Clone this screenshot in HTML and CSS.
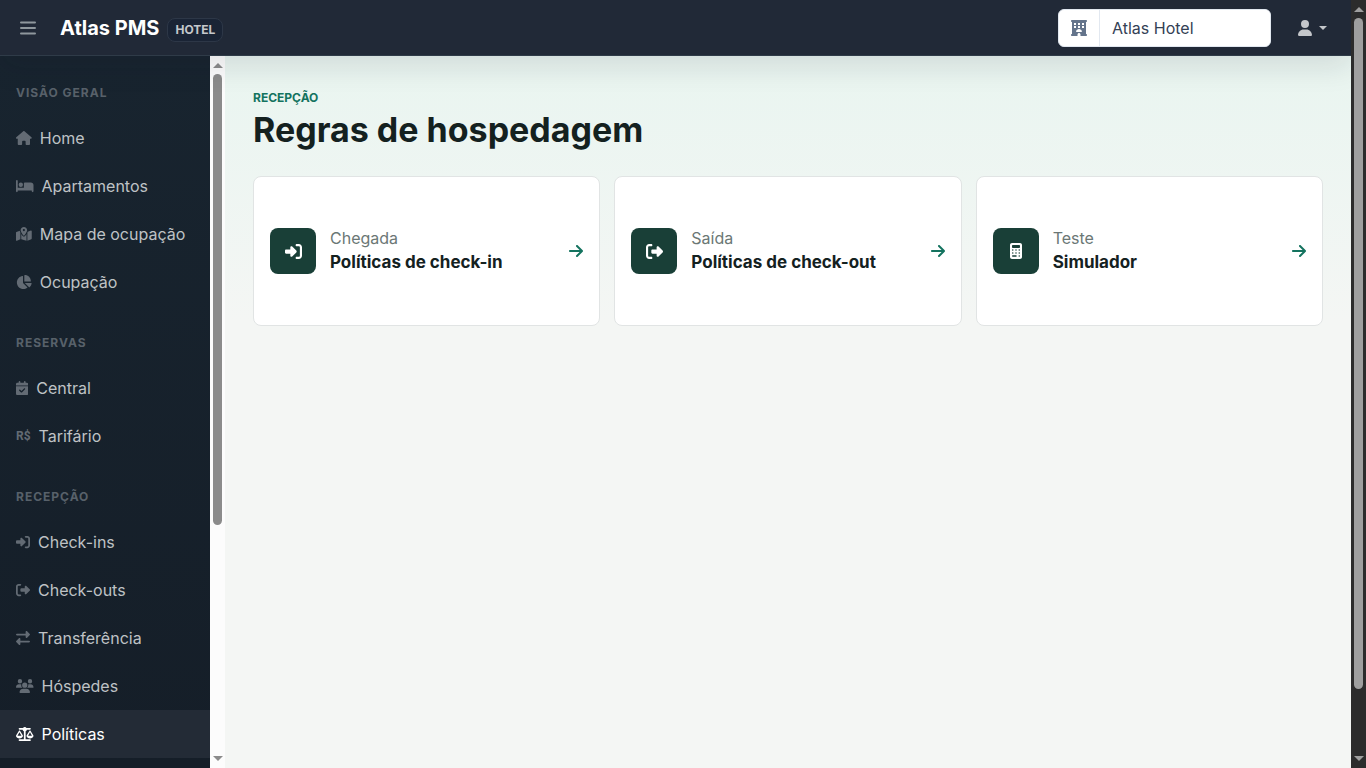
FILE: index.html
```html
<!DOCTYPE html>
<html lang="pt-BR">
<head>
  <meta charset="UTF-8" />
  <meta name="viewport" content="width=device-width, initial-scale=1" />
  <title>Atlas PMS - Regras de hospedagem</title>
  <link rel="stylesheet" href="styles.css">
</head>
<body>
  <!-- Shared icons -->
  <svg class="icon-defs" aria-hidden="true">
    <symbol id="i-in" viewBox="0 0 512 512"><path d="M217.9 105.9L340.7 228.7c7.2 7.2 11.3 17.1 11.3 27.3s-4.1 20.1-11.3 27.3L217.9 406.1c-6.4 6.4-15 9.9-24 9.9c-18.7 0-33.9-15.2-33.9-33.9l0-62.1L32 320c-17.7 0-32-14.3-32-32l0-64c0-17.7 14.3-32 32-32l128 0 0-62.1c0-18.7 15.2-33.9 33.9-33.9c9 0 17.6 3.6 24 9.9zM352 416l64 0c17.7 0 32-14.3 32-32l0-256c0-17.7-14.3-32-32-32l-64 0c-17.7 0-32-14.3-32-32s14.3-32 32-32l64 0c53 0 96 43 96 96l0 256c0 53-43 96-96 96l-64 0c-17.7 0-32-14.3-32-32s14.3-32 32-32z"/></symbol>
    <symbol id="i-out" viewBox="0 0 512 512"><path d="M377.9 105.9L500.7 228.7c7.2 7.2 11.3 17.1 11.3 27.3s-4.1 20.1-11.3 27.3L377.9 406.1c-6.4 6.4-15 9.9-24 9.9c-18.7 0-33.9-15.2-33.9-33.9l0-62.1-128 0c-17.7 0-32-14.3-32-32l0-64c0-17.7 14.3-32 32-32l128 0 0-62.1c0-18.7 15.2-33.9 33.9-33.9c9 0 17.6 3.6 24 9.9zM160 96L96 96c-17.7 0-32 14.3-32 32l0 256c0 17.7 14.3 32 32 32l64 0c17.7 0 32 14.3 32 32s-14.3 32-32 32l-64 0c-53 0-96-43-96-96L0 128C0 75 43 32 96 32l64 0c17.7 0 32 14.3 32 32s-14.3 32-32 32z"/></symbol>
    <symbol id="i-arrow" viewBox="0 0 448 512"><path d="M438.6 278.6c12.5-12.5 12.5-32.8 0-45.3l-160-160c-12.5-12.5-32.8-12.5-45.3 0s-12.5 32.8 0 45.3L338.8 224 32 224c-17.7 0-32 14.3-32 32s14.3 32 32 32l306.7 0L233.4 393.4c-12.5 12.5-12.5 32.8 0 45.3s32.8 12.5 45.3 0l160-160z"/></symbol>
  </svg>

  <div class="app">
    <header class="topbar">
      <button class="menu-btn" type="button" aria-label="Menu">
        <svg viewBox="0 0 16 16" width="16" height="16"><path d="M1 2.5h14M1 8h14M1 13.5h14" fill="none" stroke="currentColor" stroke-width="2" stroke-linecap="round"/></svg>
      </button>
      <a class="brand" href="#">Atlas PMS <span class="brand-badge">HOTEL</span></a>
      <div class="hotel-picker">
        <label class="hotel-icon" for="hotel" aria-label="Hotel">
          <svg viewBox="0 0 512 512" width="16" height="16"><path fill-rule="evenodd" d="M0 32C0 14.3 14.3 0 32 0H480c17.7 0 32 14.3 32 32s-14.3 32-32 32V448c17.7 0 32 14.3 32 32s-14.3 32-32 32H304V464c0-26.5-21.5-48-48-48s-48 21.5-48 48v48H32c-17.7 0-32-14.3-32-32s14.3-32 32-32V64C14.3 64 0 49.7 0 32zM96 96v64h64V96zM224 96v64h64V96zM352 96v64h64V96zM96 192v64h64v-64zM224 192v64h64v-64zM352 192v64h64v-64zM328 384c13.3 0 24.3-10.9 21-23.8c-10.6-41.5-48.2-72.2-93-72.2s-82.5 30.7-93 72.2c-3.3 12.8 7.8 23.8 21 23.8H328z"/></svg>
        </label>
        <select class="hotel-select" id="hotel">
          <option>Atlas Hotel</option>
        </select>
      </div>
      <button class="user-btn" type="button" aria-label="Conta">
        <svg viewBox="0 0 448 512" width="16" height="16"><path d="M224 256A128 128 0 1 0 224 0a128 128 0 1 0 0 256zm-45.7 48C79.8 304 0 383.8 0 482.3C0 498.7 13.3 512 29.7 512H418.3c16.4 0 29.7-13.3 29.7-29.7C448 383.8 368.2 304 269.7 304H178.3z"/></svg>
        <span class="caret"></span>
      </button>
    </header>

    <div class="layout">
      <nav class="sidebar">
        <h2 class="nav-heading">Visão geral</h2>
        <a class="nav-item" href="#">
          <svg class="nav-icon" viewBox="0 0 576 512"><path d="M575.8 255.5c0 18-15 32.1-32 32.1h-32l.7 160.2c0 2.7-.2 5.4-.5 8.1V472c0 22.1-17.9 40-40 40H456c-1.1 0-2.2 0-3.3-.1c-1.4 .1-2.8 .1-4.2 .1H416 392c-22.1 0-40-17.9-40-40V448 384c0-17.7-14.3-32-32-32H256c-17.7 0-32 14.3-32 32v64 24c0 22.1-17.9 40-40 40H160 128.1c-1.5 0-3-.1-4.5-.2c-1.2 .1-2.4 .2-3.6 .2H104c-22.1 0-40-17.9-40-40V360c0-.9 0-1.9 .1-2.8V287.6H32c-18 0-32-14-32-32.1c0-9 3-17 10-24L266.4 8c7-7 15-8 22-8s15 2 21 7L564.8 231.5c8 7 12 15 11 24z"/></svg>
          Home
        </a>
        <a class="nav-item" href="#">
          <svg class="nav-icon" viewBox="0 0 640 512"><path d="M32 32c17.7 0 32 14.3 32 32V320H288V160c0-17.7 14.3-32 32-32H544c53 0 96 43 96 96V448c0 17.7-14.3 32-32 32s-32-14.3-32-32V416H352 320 64v32c0 17.7-14.3 32-32 32s-32-14.3-32-32V64C0 46.3 14.3 32 32 32zm144 96a80 80 0 1 1 0 160 80 80 0 1 1 0-160z"/></svg>
          Apartamentos
        </a>
        <a class="nav-item" href="#">
          <svg class="nav-icon" viewBox="0 0 576 512"><path fill-rule="evenodd" d="M408 120c0 54.6-73.1 151.9-105.2 192c-7.7 9.6-22 9.6-29.6 0C241.1 271.9 168 174.6 168 120C168 53.7 221.7 0 288 0s120 53.7 120 120zm8 80.4c3.5-6.9 6.7-13.8 9.6-20.6c.5-1.2 1-2.5 1.5-3.7l116-46.4C558.9 123.4 576 135 576 152V422.8c0 9.8-6 18.6-15.1 22.3L416 503V200.4zM137.6 138.3c2.4 14.1 7.2 28.3 12.8 41.5c2.9 6.8 6.1 13.7 9.6 20.6V451.8L32.9 502.7C17.1 509 0 497.4 0 480.4V209.6c0-9.8 6-18.6 15.1-22.3l122.6-49zM327.8 332c13.9-17.4 35.7-45.7 56.2-77V504.3L192 449.4V255c20.5 31.3 42.3 59.6 56.2 77c20.5 25.6 59.1 25.6 79.6 0zM288 152a40 40 0 1 0 0-80 40 40 0 1 0 0 80z"/></svg>
          Mapa de ocupação
        </a>
        <a class="nav-item" href="#">
          <svg class="nav-icon" viewBox="0 0 576 512"><path d="M304 240V16.6c0-9 7-16.6 16-16.6C443.7 0 544 100.3 544 224c0 9-7.6 16-16.6 16H304zM32 272C32 150.7 122.1 50.3 239 34.3c9.2-1.3 17 6.1 17 15.4V288L412.5 444.5c6.7 6.7 6.2 17.7-1.5 23.1C371.8 495.6 323.8 512 272 512C139.5 512 32 404.6 32 272zm526.4 16c9.3 0 16.6 7.8 15.4 17c-7.7 55.9-34.6 105.6-73.9 142.3c-6 5.6-15.4 5.2-21.2-.7L320 288H558.4z"/></svg>
          Ocupação
        </a>

        <h2 class="nav-heading">Reservas</h2>
        <a class="nav-item" href="#">
          <svg class="nav-icon" viewBox="0 0 448 512"><path fill-rule="evenodd" d="M128 0c17.7 0 32 14.3 32 32V64H288V32c0-17.7 14.3-32 32-32s32 14.3 32 32V64h48c26.5 0 48 21.5 48 48v48H0V112C0 85.5 21.5 64 48 64H96V32c0-17.7 14.3-32 32-32zM0 192H448V464c0 26.5-21.5 48-48 48H48c-26.5 0-48-21.5-48-48V192zM329 305c9.4-9.4 9.4-24.6 0-33.9s-24.6-9.4-33.9 0l-95 95-47-47c-9.4-9.4-24.6-9.4-33.9 0s-9.4 24.6 0 33.9l64 64c9.4 9.4 24.6 9.4 33.9 0L329 305z"/></svg>
          Central
        </a>
        <a class="nav-item" href="#">
          <span class="nav-icon nav-currency">R$</span>
          Tarifário
        </a>

        <h2 class="nav-heading">Recepção</h2>
        <a class="nav-item" href="#">
          <svg class="nav-icon" viewBox="0 0 512 512"><use href="#i-in"/></svg>
          Check-ins
        </a>
        <a class="nav-item" href="#">
          <svg class="nav-icon" viewBox="0 0 512 512"><use href="#i-out"/></svg>
          Check-outs
        </a>
        <a class="nav-item" href="#">
          <svg class="nav-icon" viewBox="0 0 512 512"><path d="M32 96l320 0V32c0-12.9 7.8-24.6 19.8-29.6s25.7-2.2 34.9 6.9l96 96c6 6 9.4 14.1 9.4 22.6s-3.4 16.6-9.4 22.6l-96 96c-9.2 9.2-22.9 11.9-34.9 6.9s-19.8-16.6-19.8-29.6V160L32 160c-17.7 0-32-14.3-32-32s14.3-32 32-32zM480 352c17.7 0 32 14.3 32 32s-14.3 32-32 32H160v64c0 12.9-7.8 24.6-19.8 29.6s-25.7 2.2-34.9-6.9l-96-96c-6-6-9.4-14.1-9.4-22.6s3.4-16.6 9.4-22.6l96-96c9.2-9.2 22.9-11.9 34.9-6.9s19.8 16.6 19.8 29.6l0 64H480z"/></svg>
          Transferência
        </a>
        <a class="nav-item" href="#">
          <svg class="nav-icon" viewBox="0 0 640 512"><path d="M144 0a80 80 0 1 1 0 160A80 80 0 1 1 144 0zM512 0a80 80 0 1 1 0 160A80 80 0 1 1 512 0zM0 298.7C0 239.8 47.8 192 106.7 192h42.7c15.9 0 31 3.5 44.6 9.7c-1.3 7.2-1.9 14.7-1.9 22.3c0 38.2 16.8 72.5 43.3 96c-.2 0-.4 0-.7 0H21.3C9.6 320 0 310.4 0 298.7zM405.3 320c-.2 0-.4 0-.7 0c26.6-23.5 43.3-57.8 43.3-96c0-7.6-.7-15-1.9-22.3c13.6-6.3 28.7-9.7 44.6-9.7h42.7C592.2 192 640 239.8 640 298.7c0 11.8-9.6 21.3-21.3 21.3H405.3zM224 224a96 96 0 1 1 192 0 96 96 0 1 1 -192 0zM128 485.3C128 411.7 187.7 352 261.3 352H378.7C452.3 352 512 411.7 512 485.3c0 14.7-11.9 26.7-26.7 26.7H154.7c-14.7 0-26.7-11.9-26.7-26.7z"/></svg>
          Hóspedes
        </a>
        <a class="nav-item active" href="#" aria-current="page">
          <svg class="nav-icon" viewBox="0 0 640 512"><path d="M384 32H512c17.7 0 32 14.3 32 32s-14.3 32-32 32H398.4c-5.2 25.8-22.9 47.1-46.4 57.3V448H512c17.7 0 32 14.3 32 32s-14.3 32-32 32H320 128c-17.7 0-32-14.3-32-32s14.3-32 32-32H288V153.3c-23.5-10.3-41.2-31.6-46.4-57.3H128c-17.7 0-32-14.3-32-32s14.3-32 32-32H256c14.6-19.4 37.8-32 64-32s49.4 12.6 64 32zm55.6 288H584.4L512 195.8 439.6 320zM512 416c-62.9 0-115.2-34-126-78.9c-2.6-11 1-22.3 6.7-32.1l95.2-163.2c5-8.6 14.2-13.8 24.1-13.8s19.1 5.3 24.1 13.8l95.2 163.2c5.7 9.8 9.3 21.1 6.7 32.1C627.2 382 574.9 416 512 416zM126.8 195.8L54.4 320H199.3L126.8 195.8zM.9 337.1c-2.6-11 1-22.3 6.7-32.1l95.2-163.2c5-8.6 14.2-13.8 24.1-13.8s19.1 5.3 24.1 13.8l95.2 163.2c5.7 9.8 9.3 21.1 6.7 32.1C242 382 189.7 416 126.8 416S11.7 382 .9 337.1z"/></svg>
          Políticas
        </a>
      </nav>
      <div class="scrollbar scrollbar-side" aria-hidden="true">
        <span class="scroll-arrow up"></span>
        <span class="scroll-thumb"></span>
        <span class="scroll-rest"></span>
        <span class="scroll-arrow down"></span>
      </div>

      <main class="content">
        <p class="eyebrow">Recepção</p>
        <h1 class="page-title">Regras de hospedagem</h1>
        <div class="cards">
          <a class="card" href="#">
            <span class="card-icon"><svg viewBox="0 0 512 512" width="17" height="17"><use href="#i-in"/></svg></span>
            <span class="card-text">
              <span class="card-label">Chegada</span>
              <strong class="card-title">Políticas de check-in</strong>
            </span>
            <svg class="card-arrow" viewBox="0 0 448 512"><use href="#i-arrow"/></svg>
          </a>
          <a class="card" href="#">
            <span class="card-icon"><svg viewBox="0 0 512 512" width="17" height="17"><use href="#i-out"/></svg></span>
            <span class="card-text">
              <span class="card-label">Saída</span>
              <strong class="card-title">Políticas de check-out</strong>
            </span>
            <svg class="card-arrow" viewBox="0 0 448 512"><use href="#i-arrow"/></svg>
          </a>
          <a class="card" href="#">
            <span class="card-icon"><svg viewBox="0 0 384 512" width="12" height="16"><path fill-rule="evenodd" d="M64 0C28.7 0 0 28.7 0 64V448c0 35.3 28.7 64 64 64H320c35.3 0 64-28.7 64-64V64c0-35.3-28.7-64-64-64H64zM96 64H288c17.7 0 32 14.3 32 32v32c0 17.7-14.3 32-32 32H96c-17.7 0-32-14.3-32-32V96c0-17.7 14.3-32 32-32zM88 200a24 24 0 1 0 0 48 24 24 0 1 0 0-48zM192 200a24 24 0 1 0 0 48 24 24 0 1 0 0-48zM296 200a24 24 0 1 0 0 48 24 24 0 1 0 0-48zM88 296a24 24 0 1 0 0 48 24 24 0 1 0 0-48zM192 296a24 24 0 1 0 0 48 24 24 0 1 0 0-48zM296 296a24 24 0 1 0 0 48 24 24 0 1 0 0-48zM88 392a24 24 0 0 0 0 48H192a24 24 0 0 0 0-48zM296 392a24 24 0 1 0 0 48 24 24 0 1 0 0-48z"/></svg></span>
            <span class="card-text">
              <span class="card-label">Teste</span>
              <strong class="card-title">Simulador</strong>
            </span>
            <svg class="card-arrow" viewBox="0 0 448 512"><use href="#i-arrow"/></svg>
          </a>
        </div>
      </main>
    </div>
  </div>
  <div class="scrollbar scrollbar-page" aria-hidden="true">
    <span class="scroll-arrow up"></span>
    <span class="scroll-thumb"></span>
    <span class="scroll-rest"></span>
    <span class="scroll-arrow down"></span>
  </div>
</body>
</html>
```

FILE: styles.css
```css
* {
  box-sizing: border-box;
}

body {
  margin: 0;
  height: 100vh;
  display: flex;
  overflow: hidden;
  font-family: Inter, "Liberation Sans", sans-serif;
  font-size: 16px;
  line-height: 24px;
  color: #14211f;
  background: #f4f6f4;
}

a {
  color: inherit;
  text-decoration: none;
}

svg {
  fill: currentColor;
  flex-shrink: 0;
}

.icon-defs {
  position: absolute;
  width: 0;
  height: 0;
}

.app {
  flex: 1;
  min-width: 0;
  display: flex;
  flex-direction: column;
  overflow: hidden;
}

/* Top bar */
.topbar {
  position: relative;
  z-index: 2;
  flex-shrink: 0;
  display: flex;
  align-items: center;
  height: 56px;
  padding: 0 24px 0 12px;
  background: #212937;
  border-bottom: 1px solid #2f3b48;
  box-shadow: 0 12px 28px rgba(15, 23, 42, 0.1);
}

.menu-btn,
.user-btn {
  display: flex;
  align-items: center;
  border: 0;
  background: none;
  padding: 8px;
}

.menu-btn {
  color: #8f979d;
}

.brand {
  display: flex;
  align-items: center;
  gap: 8px;
  margin-left: 16px;
  margin-right: auto;
  color: #fff;
  font-size: 20px;
  font-weight: 700;
}

.brand-badge {
  margin-top: 4px;
  padding: 3px 7px;
  border: 1px solid #2d3747;
  border-radius: 8px;
  background: #1a2435;
  color: #c5c8cc;
  font-size: 12px;
  line-height: 16px;
}

.hotel-picker {
  display: flex;
  width: 213px;
  height: 38px;
  border: 1px solid #e2e8f0;
  border-radius: 6px;
  background: #fff;
  overflow: hidden;
}

.hotel-icon {
  display: flex;
  align-items: center;
  padding: 0 12px;
  border-right: 1px solid #e2e8f0;
  color: #64748b;
}

.hotel-select {
  flex: 1;
  min-width: 0;
  padding: 0 12px;
  border: 0;
  appearance: none;
  background: #fff;
  color: #334155;
  font: inherit;
}

.user-btn {
  gap: 6px;
  margin-left: 18px;
  padding: 8px 0 8px 8px;
  color: #c4c6ca;
}

.caret {
  border: 4px solid transparent;
  border-top-color: currentColor;
  border-bottom: 0;
}

/* Sidebar */
.layout {
  flex: 1;
  min-height: 0;
  display: flex;
}

.sidebar {
  flex-shrink: 0;
  width: 210px;
  overflow: hidden;
  background: linear-gradient(#18242f, #151e28);
}

.nav-heading {
  margin: 0;
  padding: 28px 16px 12px;
  color: #58616a;
  font-size: 12px;
  font-weight: 700;
  line-height: 18px;
  letter-spacing: 1px;
  text-transform: uppercase;
}

.nav-item {
  display: flex;
  align-items: center;
  gap: 8px;
  padding: 12px 16px;
  color: #bfc2c5;
}

.nav-icon {
  height: 14px;
  color: #636b74;
}

.nav-currency {
  font: bold 12px/14px Roboto, "Liberation Sans", sans-serif;
}

.nav-item.active {
  background: #232b36;
  color: #fff;
}

.nav-item.active .nav-icon {
  color: #fff;
}

/* Scrollbars */
.scrollbar {
  flex-shrink: 0;
  width: 15px;
  padding: 7px 0;
  display: flex;
  flex-direction: column;
  align-items: center;
  gap: 6px;
}

.scrollbar-side {
  background: #fcfcfc;
  color: #8b8b8b;
}

.scrollbar-page {
  background: #2c2c2c;
  color: #9f9f9f;
}

.scroll-arrow {
  border: 5px solid transparent;
}

.scroll-arrow.up {
  border-top: 0;
  border-bottom-color: currentColor;
}

.scroll-arrow.down {
  border-bottom: 0;
  border-top-color: currentColor;
}

.scroll-thumb {
  width: 9px;
  border-radius: 5px;
  background: currentColor;
}

.scrollbar-side .scroll-thumb {
  flex: 451;
}

.scrollbar-side .scroll-rest {
  flex: 219;
}

.scrollbar-page .scroll-thumb {
  flex: 671;
}

.scrollbar-page .scroll-rest {
  flex: 55;
}

/* Content */
.content {
  flex: 1;
  min-width: 0;
  padding: 33px 28px;
  background: linear-gradient(#e9f5f0, #f4f6f4 264px);
}

.eyebrow {
  margin: 0;
  color: #14735f;
  font-size: 12px;
  font-weight: 700;
  line-height: 18px;
  text-transform: uppercase;
}

.page-title {
  margin: 3px 0 26px;
  font-size: 34px;
  font-weight: 700;
  line-height: 40px;
}

.cards {
  display: grid;
  grid-template-columns: repeat(3, 1fr);
  gap: 14px;
}

.card {
  display: flex;
  align-items: center;
  gap: 14px;
  min-height: 150px;
  padding: 16px;
  border: 1px solid #e1e4e4;
  border-radius: 8px;
  background: #fff;
}

.card-icon {
  display: flex;
  align-items: center;
  justify-content: center;
  width: 46px;
  height: 46px;
  border-radius: 8px;
  background: #193f37;
  color: #fff;
}

.card-text {
  flex: 1;
  display: flex;
  flex-direction: column;
  padding-bottom: 2px;
}

.card-label {
  color: #6b7775;
}

.card-title {
  font-size: 17px;
  font-weight: 700;
}

.card-arrow {
  height: 16px;
  color: #14735f;
}
```
